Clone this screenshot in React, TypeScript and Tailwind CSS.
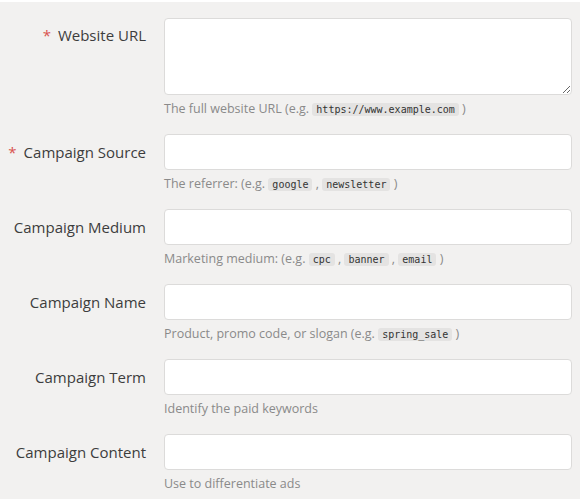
import type { ReactNode } from 'react'

function Code({ children }: { children: ReactNode }) {
  return (
    <code className="rounded-[3px] bg-[#e4e3e2] px-[4px] py-[1px] font-['DejaVu_Sans_Mono',monospace] text-[10px] leading-[12px] text-[#333]">
      {children}
    </code>
  )
}

interface FieldProps {
  label: string
  required?: boolean
  textarea?: boolean
  help: ReactNode
}

function Field({ label, required, textarea, help }: FieldProps) {
  return (
    <div className="flex items-start gap-[18px] mb-[16px]">
      <label
        className={`w-[146px] shrink-0 text-right text-[15px] font-medium text-[#3d3d3d] leading-[20px] ${
          textarea ? 'pt-[7px]' : 'pt-[8px]'
        }`}
      >
        {required && <span className="mr-[7px] text-[#d9534f]">*</span>}
        {label}
      </label>
      <div className="w-[408px]">
        {textarea ? (
          <textarea className="block h-[77px] w-full rounded-[4px] border border-[#dcdbda] bg-white" />
        ) : (
          <input className="block h-[36px] w-full rounded-[4px] border border-[#dcdbda] bg-white" />
        )}
        <div className="mt-[5px] h-[18px] text-[12.5px] leading-[18px] text-[#8a8a8a]">{help}</div>
      </div>
    </div>
  )
}

export default function App() {
  return (
    <div className="min-h-[499px] bg-white font-['Open_Sans',sans-serif]">
      <div className="mt-[2px] w-[580px] bg-[#f2f1f0] pt-[16px] pb-[2px] min-h-[497px]">
        <Field
          label="Website URL"
          required
          textarea
          help={
            <>
              The full website URL (e.g. <Code>https://www.example.com</Code> )
            </>
          }
        />
        <Field
          label="Campaign Source"
          required
          help={
            <>
              The referrer: (e.g. <Code>google</Code> , <Code>newsletter</Code> )
            </>
          }
        />
        <Field
          label="Campaign Medium"
          help={
            <>
              Marketing medium: (e.g. <Code>cpc</Code> , <Code>banner</Code> , <Code>email</Code> )
            </>
          }
        />
        <Field
          label="Campaign Name"
          help={
            <>
              Product, promo code, or slogan (e.g. <Code>spring_sale</Code> )
            </>
          }
        />
        <Field label="Campaign Term" help="Identify the paid keywords" />
        <Field label="Campaign Content" help="Use to differentiate ads" />
      </div>
    </div>
  )
}
